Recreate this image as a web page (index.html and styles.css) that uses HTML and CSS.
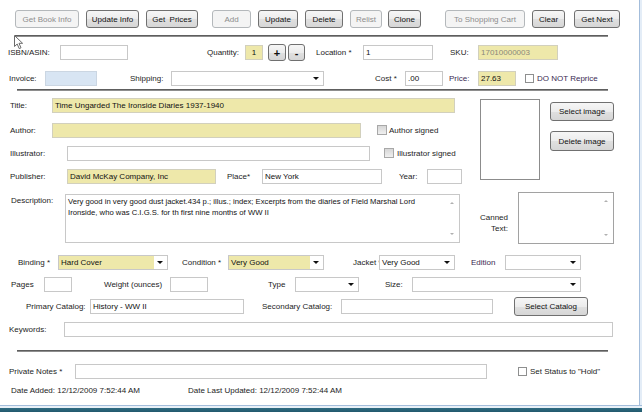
FILE: index.html
```html
<!DOCTYPE html>
<html>
<head>
<meta charset="utf-8">
<link rel="stylesheet" href="styles.css">
</head>
<body>
<div class="window">
  <div class="toolbar">
    <div class="btn dis b-getbook">Get Book Info</div>
    <div class="btn b-updinfo">Update Info</div>
    <div class="btn b-prices">Get&nbsp; Prices</div>
    <div class="btn dis b-add">Add</div>
    <div class="btn b-update">Update</div>
    <div class="btn b-delete">Delete</div>
    <div class="btn dis b-relist">Relist</div>
    <div class="btn b-clone">Clone</div>
    <div class="btn dis b-cart">To Shopping Cart</div>
    <div class="btn b-clear">Clear</div>
    <div class="btn b-next">Get Next</div>
  </div>
  <div class="sep sep-top"></div>

  <div class="row r1">
    <span class="lbl l-isbn">ISBN/ASIN:</span>
    <div class="tb f-isbn"></div>
    <span class="lbl l-qty">Quantity:</span>
    <div class="tb yel f-qty">1</div>
    <div class="btn pm f-plus">+</div>
    <div class="btn pm f-minus">-</div>
    <span class="lbl l-loc">Location *</span>
    <div class="tb f-loc">1</div>
    <span class="lbl l-sku">SKU:</span>
    <div class="tb yel f-sku">17010000003</div>
  </div>

  <div class="row r2">
    <span class="lbl l-inv">Invoice:</span>
    <div class="tb f-inv"></div>
    <span class="lbl l-ship">Shipping:</span>
    <div class="dd f-ship"><span class="val"></span></div>
    <span class="lbl l-cost">Cost *</span>
    <div class="tb f-cost">.00</div>
    <span class="lbl l-price purple">Price:</span>
    <div class="tb yel f-price">27.63</div>
    <span class="cb cb-reprice"></span>
    <span class="lbl l-reprice purple">DO NOT Reprice</span>
  </div>
  <div class="sep sep-mid"></div>

  <div class="mid">
    <div class="mid-left">
      <div class="mrow">
        <span class="lbl l-title">Title:</span>
        <div class="tb yel f-title">Time Ungarded The Ironside Diaries 1937-1940</div>
      </div>
      <div class="mrow m-author">
        <span class="lbl l-author">Author:</span>
        <div class="tb yel f-author"></div>
        <span class="cb dis cb-author"></span>
        <span class="lbl l-asigned">Author signed</span>
      </div>
      <div class="mrow m-illus">
        <span class="lbl l-illus">Illustrator:</span>
        <div class="tb f-illus"></div>
        <span class="cb dis cb-illus"></span>
        <span class="lbl l-isigned">Illustrator signed</span>
      </div>
      <div class="mrow m-pub">
        <span class="lbl l-pub">Publisher:</span>
        <div class="tb yel f-pub">David McKay Company, Inc</div>
        <span class="lbl l-place">Place*</span>
        <div class="tb f-place">New York</div>
        <span class="lbl l-year">Year:</span>
        <div class="tb f-year"></div>
      </div>
    </div>
    <div class="imgbox"></div>
    <div class="imgbtns">
      <div class="btn b-selimg">Select image</div>
      <div class="btn b-delimg">Delete image</div>
    </div>
  </div>

  <div class="drow">
    <span class="lbl l-desc">Description:</span>
    <div class="ta f-desc">Very good in very good dust jacket.434 p.; illus.; index; Excerpts from the diaries of Field Marshal Lord<br>Ironside, who was C.I.G.S. for th first nine months of WW II</div>
    <span class="lbl l-canned">Canned<br>Text:</span>
    <div class="ta f-canned"></div>
  </div>

  <div class="row r-bind">
    <span class="lbl l-bind">Binding *</span>
    <div class="dd yel f-bind"><span class="val">Hard Cover</span></div>
    <span class="lbl l-cond">Condition *</span>
    <div class="dd yel f-cond"><span class="val">Very Good</span></div>
    <span class="lbl l-jacket">Jacket *</span>
    <div class="dd f-jacket"><span class="val">Very Good</span></div>
    <span class="lbl l-edition purple">Edition</span>
    <div class="dd f-edition"><span class="val"></span></div>
  </div>

  <div class="row r-pages">
    <span class="lbl l-pages">Pages</span>
    <div class="tb f-pages"></div>
    <span class="lbl l-weight">Weight (ounces)</span>
    <div class="tb f-weight"></div>
    <span class="lbl l-type">Type</span>
    <div class="dd f-type"><span class="val"></span></div>
    <span class="lbl l-size">Size:</span>
    <div class="dd f-size"><span class="val"></span></div>
  </div>

  <div class="row r-cat">
    <span class="lbl l-pcat">Primary Catalog:</span>
    <div class="tb f-pcat">History - WW II</div>
    <span class="lbl l-scat">Secondary Catalog:</span>
    <div class="tb f-scat"></div>
    <div class="btn b-selcat">Select Catalog</div>
  </div>

  <div class="row r-kw">
    <span class="lbl l-kw">Keywords:</span>
    <div class="tb f-kw"></div>
  </div>
  <div class="sep sep-bot"></div>

  <div class="row r-notes">
    <span class="lbl l-notes">Private Notes *</span>
    <div class="tb f-notes"></div>
    <span class="cb cb-hold"></span>
    <span class="lbl l-hold">Set Status to "Hold"</span>
  </div>

  <div class="row r-date">
    <span class="lbl l-added">Date Added: 12/12/2009 7:52:44 AM</span>
    <span class="lbl l-updated">Date Last Updated: 12/12/2009 7:52:44 AM</span>
  </div>

  <svg class="cursor" width="11" height="15" viewBox="0 0 11 15">
    <path d="M0.5 0.5 L0.5 11.5 L3.2 9 L5.2 13.6 L7 12.8 L5 8.3 L8.6 8.3 Z" fill="#fff" stroke="#6a6a6a" stroke-width="1" stroke-linejoin="round"/>
  </svg>
</div>
<div class="frame-bottom"></div>
</body>
</html>
```
FILE: styles.css
```css
* { box-sizing: border-box; }
html, body { margin: 0; padding: 0; }
body {
  width: 642px;
  height: 412px;
  overflow: hidden;
  background: #e4edf7;
  font-family: "Liberation Sans", Arial, sans-serif;
  font-size: 8px;
  color: #1c1c1c;
}
.window {
  position: relative;
  width: 640px;
  height: 405px;
  background: #fff;
  border-right: 1px solid #a3bddb;
  overflow: hidden;
}
.frame-bottom {
  width: 642px;
  height: 7px;
  border-top: 1px solid #a3bddb;
  background: linear-gradient(#e8f0f8 0, #e8f0f8 2px, #2f6c82 2px, #22596d 100%);
}

/* generic controls */
.row { display: flex; align-items: center; }
.lbl { white-space: nowrap; flex: none; }
.purple { color: #3a2a52; }
.tb {
  flex: none;
  height: 15px;
  border: 1px solid #c8c8c8;
  background: #fff;
  padding: 0 2px;
  line-height: 13px;
  white-space: nowrap;
  overflow: hidden;
  color: #111;
}
.yel { background: #eee8aa; border-color: #d2d0bd; }
.dd {
  position: relative;
  flex: none;
  display: flex;
  height: 15px;
  border: 1px solid #c8c8c8;
  background: #fff;
  color: #111;
}
.dd .val {
  flex: 1;
  margin-right: 13px;
  padding-left: 2px;
  line-height: 13px;
  white-space: nowrap;
}
.dd.yel { background: #fff; }
.dd.yel .val { background: #eee8aa; }
.dd::after {
  content: "";
  position: absolute;
  right: 4px;
  top: 5px;
  border-left: 3px solid transparent;
  border-right: 3px solid transparent;
  border-top: 3px solid #111;
}
.btn {
  flex: none;
  height: 18px;
  display: flex;
  align-items: center;
  justify-content: center;
  border: 1px solid #707070;
  border-radius: 3px;
  background: linear-gradient(#f6f6f6, #ececec 50%, #e0e0e0 50%, #d6d6d6);
  color: #111;
  white-space: nowrap;
}
.btn.dis {
  border-color: #b4b8bb;
  background: #f4f4f4;
  color: #8d8d8d;
}
.cb {
  flex: none;
  width: 9px;
  height: 9px;
  border: 1px solid #8e8f8f;
  background: #fff;
}
.cb.dis {
  width: 10px;
  height: 10px;
  border-color: #a8a8a8;
  background: linear-gradient(#d6d6d6, #f0f0f0);
}
.ta {
  position: relative;
  flex: none;
  border: 1px solid #c8c8c8;
  background: #fff;
  padding: 1px 2px;
  line-height: 11px;
  white-space: nowrap;
  overflow: hidden;
  color: #111;
}
.ta::before, .ta::after {
  content: "";
  position: absolute;
  right: 5px;
  border-left: 2px solid transparent;
  border-right: 2px solid transparent;
}
.ta::before { top: 7px; border-bottom: 2px solid #b0b0b0; }
.ta::after { bottom: 7px; border-top: 2px solid #b0b0b0; }

.sep {
  height: 2px;
  border-top: 1px solid #5e5e5e;
  border-bottom: 1px solid #8e8e8e;
}
.sep-top { margin: 7px 0 0 15px; width: 593px; }
.sep-mid { margin: 3px 0 0 17px; width: 591px; }
.sep-bot { margin: 13px 0 0 17px; width: 591px; }

/* toolbar */
.toolbar { display: flex; margin-top: 10px; padding-left: 15px; }
.b-getbook { width: 64px; }
.b-updinfo { margin-left: 7px; width: 53px; }
.b-prices { margin-left: 7px; width: 52px; }
.b-add { margin-left: 14px; width: 39px; }
.b-update { margin-left: 7px; width: 40px; }
.b-delete { margin-left: 7px; width: 38px; }
.b-relist { margin-left: 7px; width: 32px; }
.b-clone { margin-left: 6px; width: 33px; }
.b-cart { margin-left: 24px; width: 80px; }
.b-clear { margin-left: 7px; width: 33px; }
.b-next { margin-left: 9px; width: 46px; }

/* row 1 */
.r1 { margin-top: 7px; height: 17px; }
.l-isbn { margin-left: 8px; width: 52px; }
.f-isbn { width: 68px; }
.l-qty { margin-left: 79px; width: 38px; }
.f-qty { width: 18px; text-align: center; }
.pm { height: 17px; font-weight: bold; font-size: 11px; }
.f-plus { margin-left: 5px; width: 18px; }
.f-minus { margin-left: 2px; width: 17px; }
.l-loc { margin-left: 11px; width: 47px; }
.f-loc { width: 70px; }
.l-sku { margin-left: 17px; width: 28px; }
.f-sku { width: 80px; color: #8a887a; }

/* row 2 */
.r2 { margin-top: 9px; height: 16px; }
.l-inv { margin-left: 9px; width: 36px; }
.f-inv { width: 52px; background: #d8e5f3; border-color: #cbd6e2; }
.l-ship { margin-left: 33px; width: 41px; }
.f-ship { width: 153px; }
.l-cost { margin-left: 51px; width: 30px; }
.f-cost { width: 38px; }
.l-price { margin-left: 6px; width: 29px; }
.f-price { width: 38px; }
.cb-reprice { margin-left: 9px; }
.l-reprice { margin-left: 3px; }

/* middle block */
.mid { display: flex; margin-top: 6px; }
.mid-left { flex: none; width: 480px; }
.mrow { display: flex; align-items: center; height: 16px; }
.m-author { margin-top: 9px; }
.m-illus { margin-top: 7px; }
.m-pub { margin-top: 7px; }
.l-title { margin-left: 10px; width: 42px; }
.f-title { width: 403px; }
.l-author { margin-left: 10px; width: 42px; }
.f-author { width: 309px; }
.cb-author { margin-left: 16px; }
.l-asigned { margin-left: 2px; }
.l-illus { margin-left: 10px; width: 57px; }
.f-illus { width: 303px; }
.cb-illus { margin-left: 14px; }
.l-isigned { margin-left: 3px; }
.l-pub { margin-left: 10px; width: 57px; }
.f-pub { width: 149px; }
.l-place { margin-left: 11px; width: 35px; }
.f-place { width: 120px; }
.l-year { margin-left: 17px; width: 28px; }
.f-year { width: 35px; }
.imgbox {
  flex: none;
  margin-top: 2px;
  width: 60px;
  height: 81px;
  border: 1px solid #8c8c8c;
}
.imgbtns { display: flex; flex-direction: column; margin-left: 10px; margin-top: 5px; }
.b-selimg { width: 64px; height: 19px; }
.b-delimg { margin-top: 10px; width: 64px; height: 20px; }

/* description */
.drow { display: flex; align-items: flex-start; margin-top: 8px; height: 52px; }
.l-desc { margin-left: 11px; width: 54px; margin-top: 3px; line-height: 11px; }
.f-desc { margin-top: 2px; width: 395px; height: 49px; font-size: 7.7px; }
.l-canned { width: 48px; margin-top: 20px; text-align: right; line-height: 11px; }
.f-canned { margin-left: 10px; width: 96px; height: 52px; border-color: #a2a2a2; }

/* binding */
.r-bind { margin-top: 10px; height: 16px; }
.l-bind { margin-left: 18px; width: 40px; }
.f-bind { width: 110px; }
.l-cond { margin-left: 14px; width: 46px; }
.f-cond { width: 96px; }
.l-jacket { margin-left: 29px; width: 26px; }
.f-jacket { width: 76px; }
.l-edition { margin-left: 16px; width: 34px; }
.f-edition { width: 76px; }

/* pages */
.r-pages { margin-top: 6px; height: 16px; }
.l-pages { margin-left: 11px; width: 33px; }
.f-pages { width: 28px; }
.l-weight { margin-left: 32px; width: 66px; }
.f-weight { width: 38px; }
.l-type { margin-left: 60px; width: 27px; }
.f-type { width: 64px; }
.l-size { margin-left: 26px; width: 27px; }
.f-size { width: 169px; }

/* catalog */
.r-cat { margin-top: 5px; height: 19px; }
.l-pcat { margin-left: 26px; width: 64px; }
.f-pcat { width: 154px; }
.l-scat { margin-left: 18px; width: 79px; }
.f-scat { width: 152px; }
.b-selcat { margin-left: 21px; width: 74px; height: 19px; }

/* keywords */
.r-kw { margin-top: 5px; height: 16px; }
.l-kw { margin-left: 9px; width: 55px; }
.f-kw { width: 549px; }

/* notes */
.r-notes { margin-top: 11px; height: 16px; }
.l-notes { margin-left: 9px; width: 66px; }
.f-notes { width: 412px; }
.cb-hold { margin-left: 31px; }
.l-hold { margin-left: 3px; }

/* dates */
.r-date { margin-top: 6px; height: 11px; }
.l-added { margin-left: 11px; width: 177px; }

.cursor { position: absolute; left: 14px; top: 35px; }
```
